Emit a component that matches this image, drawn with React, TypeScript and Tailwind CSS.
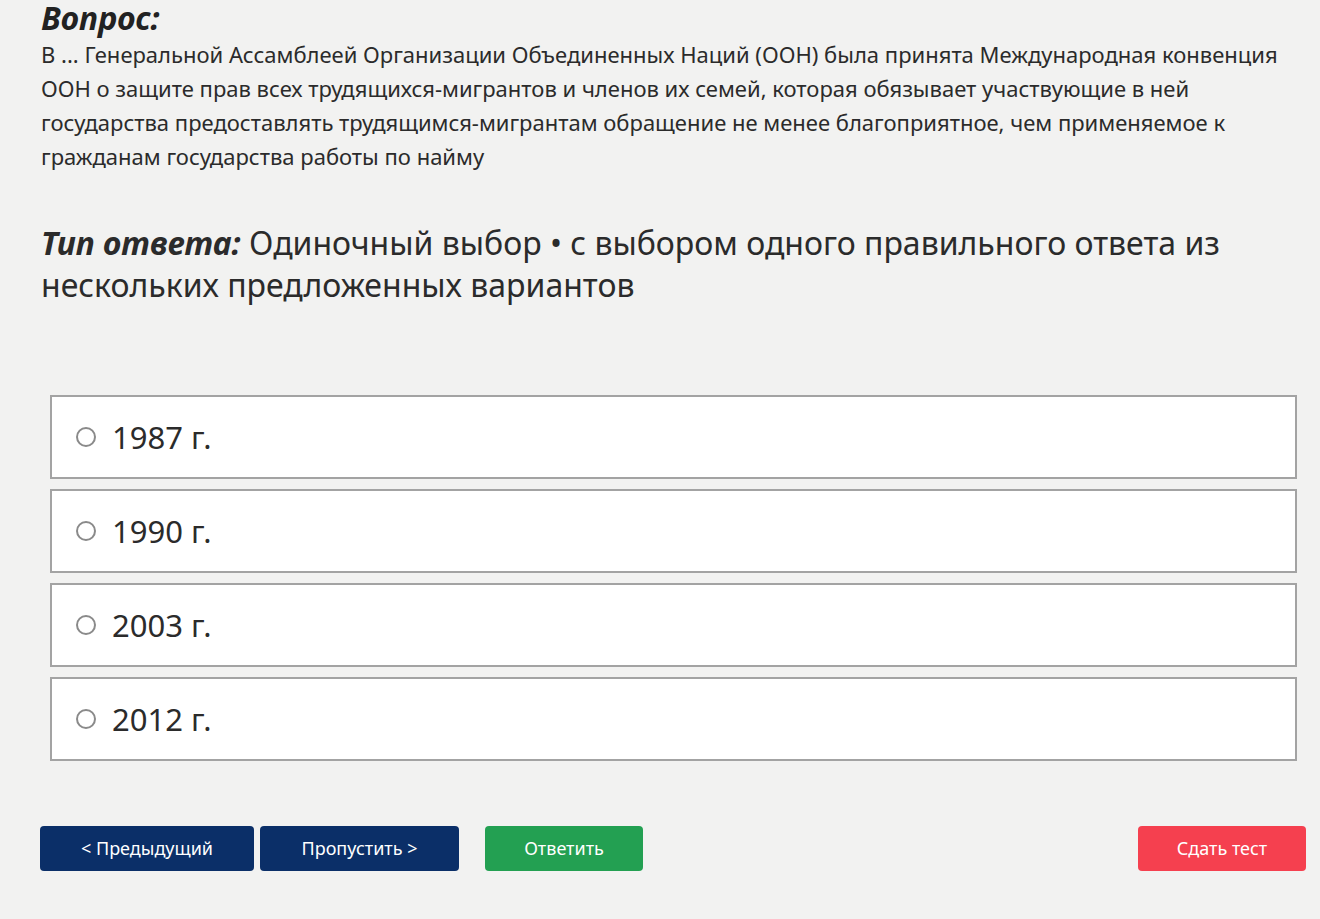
import React, { useState } from 'react';

const options = ['1987 г.', '1990 г.', '2003 г.', '2012 г.'];

const font = { fontFamily: '"Noto Sans", "Open Sans", sans-serif' };

const App: React.FC = () => {
    const [selected, setSelected] = useState<number | null>(null);

    return (
        <div className="min-h-[919px] w-[1320px] bg-[#f2f2f1] text-[#222] overflow-hidden" style={font}>
            <div className="pl-[41px] pr-[24px]">
                <h2 className="text-[32px] font-bold italic leading-[34px] mt-[1px]">Вопрос:</h2>
                <p className="mt-[2px] max-w-[1255px] text-[22px] leading-[34px] text-[#2b2b2b]">
                    В ... Генеральной Ассамблеей Организации Объединенных Наций (ООН) была принята Международная конвенция ООН о защите прав всех трудящихся-мигрантов и членов их семей, которая обязывает участвующие в ней государства предоставлять трудящимся-мигрантам обращение не менее благоприятное, чем применяемое к гражданам государства работы по найму
                </p>

                <p className="mt-[49px] max-w-[1215px] text-[32px] leading-[42px] text-[#2b2b2b]">
                    <span className="font-bold italic">Тип ответа:</span> Одиночный выбор • с выбором одного правильного ответа из нескольких предложенных вариантов
                </p>
            </div>

            <div className="mt-[89px] ml-[50px] w-[1247px] flex flex-col gap-[10px]">
                {options.map((opt, i) => (
                    <label
                        key={opt}
                        className="h-[84px] bg-white border-2 border-[#a3a3a3] flex items-center pl-[24px] cursor-pointer"
                        onClick={() => setSelected(i)}
                    >
                        <span className="w-[20px] h-[20px] rounded-full border-2 border-[#8a8a8a] flex items-center justify-center mr-[16px]">
                            {selected === i && <span className="w-[10px] h-[10px] rounded-full bg-[#555]" />}
                        </span>
                        <span className="text-[31px] text-[#2b2b2b] leading-none">{opt}</span>
                    </label>
                ))}
            </div>

            <div className="mt-[65px] pl-[40px] pr-[14px] flex items-center">
                <button className="w-[214px] h-[45px] rounded-[4px] bg-[#0b2f68] text-white text-[18px]">&lt; Предыдущий</button>
                <button className="ml-[6px] w-[199px] h-[45px] rounded-[4px] bg-[#0b2f68] text-white text-[18px]">Пропустить &gt;</button>
                <button className="ml-[26px] w-[158px] h-[45px] rounded-[4px] bg-[#23a052] text-white text-[18px]">Ответить</button>
                <button className="ml-auto w-[168px] h-[45px] rounded-[4px] bg-[#f5404f] text-white text-[18px]">Сдать тест</button>
            </div>
        </div>
    );
};

export default App;
